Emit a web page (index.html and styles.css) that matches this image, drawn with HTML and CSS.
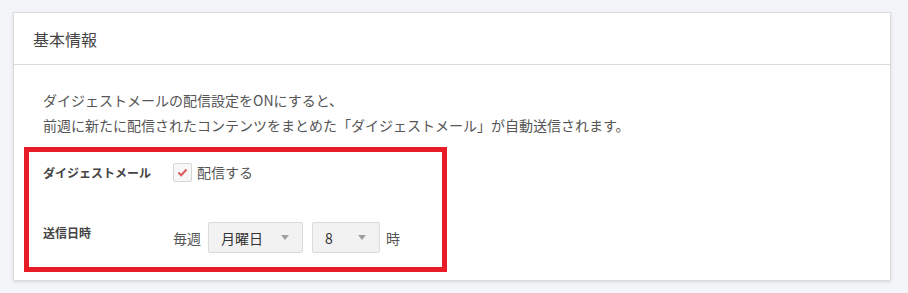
FILE: index.html
```html
<!DOCTYPE html>
<html lang="ja">
<head>
    <meta charset="UTF-8">
    <meta name="viewport" content="width=device-width, initial-scale=1.0">
    <title>基本情報</title>
    <link rel="stylesheet" href="styles.css">
</head>
<body>

    <div class="page">
        <div class="card">
            <div class="card-header">基本情報</div>
            <div class="card-body">
                <p class="description">
                    ダイジェストメールの配信設定をONにすると、<br>
                    前週に新たに配信されたコンテンツをまとめた「ダイジェストメール」が自動送信されます。
                </p>

                <div class="form-row">
                    <div class="form-label">ダイジェストメール</div>
                    <label class="checkbox">
                        <span class="checkbox-box">
                            <svg width="11" height="9" viewBox="0 0 11 9">
                                <polyline points="1.5,4.5 4.2,7.2 9.5,1.5" fill="none" stroke="#e05a5f" stroke-width="2"/>
                            </svg>
                        </span>
                        <span>配信する</span>
                    </label>
                </div>

                <div class="form-row schedule">
                    <div class="form-label">送信日時</div>
                    <div class="schedule-fields">
                        <span>毎週</span>
                        <div class="select select-day">
                            <span>月曜日</span>
                            <span class="caret"></span>
                        </div>
                        <div class="select select-hour">
                            <span>8</span>
                            <span class="caret"></span>
                        </div>
                        <span>時</span>
                    </div>
                </div>

                <!-- annotation frame -->
                <div class="highlight"></div>
            </div>
        </div>
    </div>

</body>
</html>
```

FILE: styles.css
```css
* {
    margin: 0;
    padding: 0;
    box-sizing: border-box;
}

body {
    background-color: #f4f5f9;
    font-family: "Noto Sans CJK JP", "Noto Sans", sans-serif;
    color: #555;
}

.page {
    padding: 12px 17px 14px 13px;
}

.card {
    width: 878px;
    background: #fff;
    border: 1px solid #dcdcdc;
    box-shadow: 0 1px 3px rgba(0, 0, 0, 0.12);
}

.card-header {
    height: 52px;
    padding-left: 19px;
    display: flex;
    align-items: center;
    font-size: 16px;
    color: #444;
    border-bottom: 1px solid #dcdcdc;
}

.card-body {
    position: relative;
    padding: 23px 29px 27px;
}

.description {
    font-size: 14px;
    line-height: 25px;
    color: #555;
}

.form-row {
    display: flex;
    align-items: center;
}

.form-row:first-of-type {
    margin-top: 24px;
}

.form-label {
    width: 130px;
    font-size: 12px;
    font-weight: bold;
    color: #444;
}

.checkbox {
    display: flex;
    align-items: center;
    gap: 5px;
    font-size: 14px;
    color: #555;
}

.checkbox-box {
    width: 19px;
    height: 19px;
    border: 1px solid #d6d6d6;
    border-radius: 2px;
    background: #f7f7f7;
    display: flex;
    align-items: center;
    justify-content: center;
}

.schedule {
    margin-top: 40px;
    align-items: flex-start;
}

.schedule .form-label {
    padding-top: 2px;
}

.schedule-fields {
    display: flex;
    align-items: center;
    gap: 6px;
    font-size: 14px;
    color: #555;
}

.select {
    height: 31px;
    display: flex;
    align-items: center;
    justify-content: space-between;
    padding: 0 13px 0 12px;
    background: #f2f2f2;
    border: 1px solid #dadada;
    border-radius: 2px;
    color: #333;
    font-size: 14px;
}

.select-day {
    width: 95px;
    margin-left: 1px;
}

.select-hour {
    width: 68px;
    margin-left: 3px;
}

.caret {
    width: 0;
    height: 0;
    border-left: 4px solid transparent;
    border-right: 4px solid transparent;
    border-top: 5px solid #a0a0a0;
}

.highlight {
    position: absolute;
    left: 10px;
    top: 82px;
    width: 423px;
    height: 125px;
    border: 5px solid #e81c27;
    pointer-events: none;
}
```
